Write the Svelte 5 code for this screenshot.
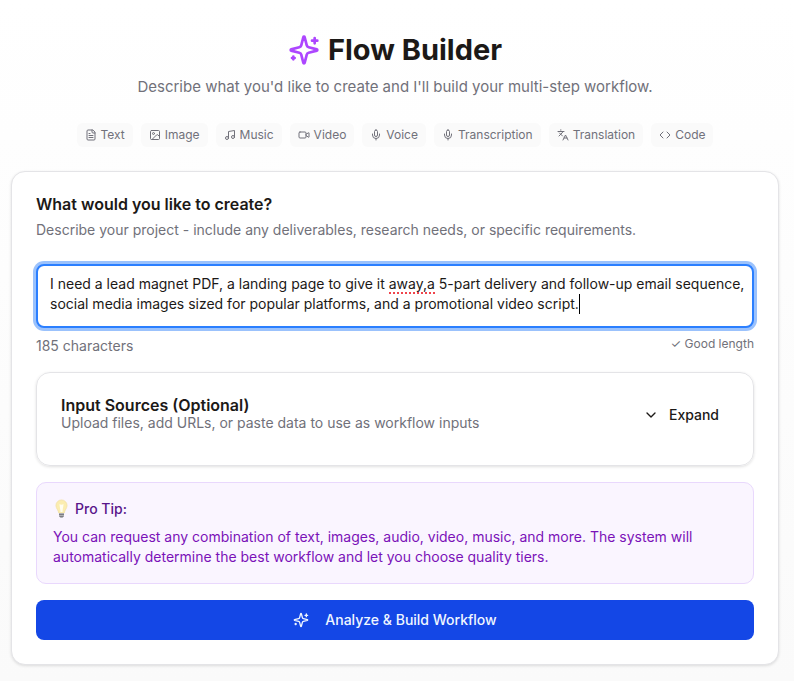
<script lang="ts">
	import { onMount } from 'svelte';

	let prompt = $state(
		'I need a lead magnet PDF, a landing page to give it away,a 5-part delivery and follow-up email sequence, social media images sized for popular platforms, and a promotional video script.'
	);
	let expanded = $state(false);
	let field: HTMLTextAreaElement;
	let fieldWidth = $state(0);
	let ready = $state(false);

	const misspelled = 'away,a';
	const lineHeight = 20;
	const padLeft = 14;
	const padTop = 10;

	const types = [
		{ name: 'Text', icon: 'text' },
		{ name: 'Image', icon: 'image' },
		{ name: 'Music', icon: 'music' },
		{ name: 'Video', icon: 'video' },
		{ name: 'Voice', icon: 'mic' },
		{ name: 'Transcription', icon: 'mic' },
		{ name: 'Translation', icon: 'translate' },
		{ name: 'Code', icon: 'code' }
	];

	onMount(() => {
		ready = true;
	});

	// Wraps the text the way the field does and finds the flagged word and the caret
	function measure(text: string, width: number) {
		const ctx = document.createElement('canvas').getContext('2d')!;
		ctx.font = getComputedStyle(field).font;
		const size = (s: string) => ctx.measureText(s).width;
		const room = width - 20;
		let line = '';
		let row = 0;
		let word = null;
		for (const w of text.split(' ')) {
			if (line && size(line + w) > room) {
				line = '';
				row++;
			}
			if (w === misspelled) {
				word = { left: padLeft + size(line), top: padTop + row * lineHeight, width: size(w) };
			}
			line += w + ' ';
		}
		return {
			word,
			caret: { left: padLeft + size(line.slice(0, -1)), top: padTop + row * lineHeight }
		};
	}

	let marks = $derived(ready && fieldWidth ? measure(prompt, fieldWidth) : null);
</script>

{#snippet icon(name: string)}
	<svg class="icon" viewBox="0 0 24 24" aria-hidden="true">
		{#if name === 'sparkles'}
			<path d="M9.937 15.5A2 2 0 0 0 8.5 14.063l-6.135-1.582a.5.5 0 0 1 0-.962L8.5 9.936A2 2 0 0 0 9.937 8.5l1.582-6.135a.5.5 0 0 1 .963 0L14.063 8.5A2 2 0 0 0 15.5 9.937l6.135 1.581a.5.5 0 0 1 0 .964L15.5 14.063a2 2 0 0 0-1.437 1.437l-1.582 6.135a.5.5 0 0 1-.963 0z" />
			<path d="M20 3v4M22 5h-4M4 17v2M5 18H3" />
		{:else if name === 'text'}
			<path d="M15 2H6a2 2 0 0 0-2 2v16a2 2 0 0 0 2 2h12a2 2 0 0 0 2-2V7z" />
			<path d="M14 2v4a2 2 0 0 0 2 2h4M10 9H8M16 13H8M16 17H8" />
		{:else if name === 'image'}
			<rect x="3" y="3" width="18" height="18" rx="2" />
			<circle cx="9" cy="9" r="2" />
			<path d="m21 15-3.1-3.1a2 2 0 0 0-2.8 0L6 21" />
		{:else if name === 'music'}
			<path d="M9 18V5l12-2v13" />
			<circle cx="6" cy="18" r="3" />
			<circle cx="18" cy="16" r="3" />
		{:else if name === 'video'}
			<path d="m16 13 5.2 3.5a.5.5 0 0 0 .8-.4V7.9a.5.5 0 0 0-.8-.4L16 10.5" />
			<rect x="2" y="6" width="14" height="12" rx="2" />
		{:else if name === 'mic'}
			<path d="M12 2a3 3 0 0 0-3 3v7a3 3 0 0 0 6 0V5a3 3 0 0 0-3-3z" />
			<path d="M19 10v2a7 7 0 0 1-14 0v-2M12 19v3" />
		{:else if name === 'translate'}
			<path d="m5 8 6 6M4 14l6-6 2-3M2 5h12M7 2h1M22 22l-5-10-5 10M14 18h6" />
		{:else if name === 'code'}
			<path d="m16 18 6-6-6-6M8 6l-6 6 6 6" />
		{:else if name === 'chevron'}
			<path d="m6 9 6 6 6-6" />
		{/if}
	</svg>
{/snippet}

<main>
	<header>
		<h1>{@render icon('sparkles')}Flow Builder</h1>
		<p>Describe what you'd like to create and I'll build your multi-step workflow.</p>
	</header>

	<ul class="types">
		{#each types as type}
			<li>{@render icon(type.icon)}{type.name}</li>
		{/each}
	</ul>

	<section class="card">
		<label class="title" for="prompt">What would you like to create?</label>
		<p class="muted" id="prompt-help">
			Describe your project - include any deliverables, research needs, or specific requirements.
		</p>

		<div class="editor" bind:clientWidth={fieldWidth}>
			<textarea
				id="prompt"
				aria-describedby="prompt-help"
				spellcheck="false"
				rows="2"
				bind:this={field}
				bind:value={prompt}
			></textarea>
			{#if marks}
				{#if marks.word}
					<span
						class="misspelled"
						style="left: {marks.word.left}px; top: {marks.word.top}px; width: {marks.word.width}px"
					></span>
				{/if}
				<span class="caret" style="left: {marks.caret.left}px; top: {marks.caret.top}px"></span>
			{/if}
		</div>

		<div class="status">
			<span class="muted">{prompt.length} characters</span>
			{#if prompt.length > 50}
				<span class="hint">✓ Good length</span>
			{/if}
		</div>

		<div class="sources">
			<div>
				<h2 class="title">Input Sources (Optional)</h2>
				<p class="muted">Upload files, add URLs, or paste data to use as workflow inputs</p>
			</div>
			<button class="expand" aria-expanded={expanded} onclick={() => (expanded = !expanded)}>
				{@render icon('chevron')}Expand
			</button>
		</div>

		<div class="tip">
			<h3>
				<svg class="bulb" viewBox="0 0 16 20" aria-hidden="true">
					<path d="M8 1a5.500 5.500 0 0 0-5.500 5.500C2.500 9.500 5 11 5.300 14h5.400c.3-3 2.800-4.500 2.800-7.500A5.500 5.500 0 0 0 8 1z" fill="#fbedb0" stroke="#f5e4ac" />
					<path d="M6 5c0 3 1 5 1 8h2c0-3 1-5 1-8-1 1-3 1-4 0z" fill="#fffdf0" />
					<path d="M5.500 14h5v3L9 19H7l-1.500-2z" fill="#b0b0b4" />
					<path d="M5.500 15.500h5M6 17.500h4" stroke="#7d7d84" />
				</svg>
				Pro Tip:
			</h3>
			<p>
				You can request any combination of text, images, audio, video, music, and more. The system
				will automatically determine the best workflow and let you choose quality tiers.
			</p>
		</div>

		<button class="submit">{@render icon('sparkles')}Analyze &amp; Build Workflow</button>
	</section>
</main>

<style>
	:global(body) {
		background: linear-gradient(#ffffff, #fafafa);
		font-family: Inter, 'Liberation Sans', sans-serif;
		font-size: 14px;
		line-height: 20px;
		color: #1c1917;
	}

	main {
		max-width: 768px;
		margin: 0 auto;
		padding: 32px 15px 16px 11px;
	}

	h1,
	h2,
	h3,
	p,
	ul {
		margin: 0;
		padding: 0;
	}

	button,
	textarea {
		font: inherit;
		color: inherit;
	}

	.icon {
		flex: none;
		width: 16px;
		height: 16px;
		fill: none;
		stroke: currentColor;
		stroke-width: 2;
		stroke-linecap: round;
		stroke-linejoin: round;
	}

	header {
		text-align: center;
	}

	h1 {
		display: flex;
		justify-content: center;
		align-items: center;
		gap: 8px;
		font-size: 29px;
		line-height: 36px;
		font-weight: 700;
	}

	h1 .icon {
		width: 32px;
		height: 32px;
		color: #ad46ff;
	}

	header p {
		margin-top: 8px;
		font-size: 15px;
		line-height: 22px;
		color: #71717a;
	}

	.types {
		display: flex;
		flex-wrap: wrap;
		justify-content: center;
		gap: 8px;
		margin: 25px 0 24px;
		list-style: none;
	}

	.types li {
		display: flex;
		align-items: center;
		gap: 4px;
		padding: 4px 8px;
		border-radius: 6px;
		background: #fafafa;
		font-size: 12px;
		line-height: 16px;
		color: #71717a;
	}

	.types .icon {
		width: 12px;
		height: 12px;
	}

	.card {
		padding: 24px;
		border: 1px solid #e4e4e7;
		border-radius: 14px;
		background: #ffffff;
		box-shadow: 0 1px 3px rgba(0, 0, 0, 0.12);
	}

	.title {
		display: block;
		font-size: 16px;
		line-height: 16px;
		font-weight: 600;
	}

	.muted {
		color: #71717a;
	}

	.card > .muted {
		margin-top: 8px;
	}

	.editor {
		position: relative;
		margin-top: 24px;
	}

	textarea {
		display: block;
		box-sizing: border-box;
		width: 100%;
		min-height: 64px;
		padding: 8px 4px 8px 12px;
		border: 2px solid #2b7fff;
		border-radius: 8px;
		resize: none;
		outline: none;
		overflow: hidden;
		background: #ffffff;
		box-shadow: 0 0 0 3px #9bc2fc;
		caret-color: transparent;
	}

	.misspelled,
	.caret {
		position: absolute;
		box-sizing: border-box;
		height: 20px;
		pointer-events: none;
	}

	.misspelled {
		border-bottom: 2px dotted #f0444c;
	}

	.caret {
		border-left: 1px solid #000000;
	}

	.status {
		display: flex;
		justify-content: space-between;
		margin-top: 8px;
	}

	.hint {
		font-size: 12px;
		line-height: 16px;
		color: #71717a;
	}

	.sources {
		display: flex;
		justify-content: space-between;
		align-items: flex-start;
		margin-top: 16px;
		padding: 24px 24px 32px;
		border: 1px solid #e4e4e7;
		border-radius: 14px;
		box-shadow: 0 1px 3px rgba(0, 0, 0, 0.12);
	}

	.expand {
		display: flex;
		align-items: center;
		gap: 10px;
		padding: 8px 10px;
		border: none;
		background: none;
		font-weight: 500;
		cursor: pointer;
	}

	.tip {
		margin-top: 16px;
		padding: 16px;
		border: 1px solid #e9d8fd;
		border-radius: 10px;
		background: #faf5ff;
		color: #7a12b8;
	}

	.tip h3 {
		display: flex;
		align-items: center;
		gap: 5px;
		margin-bottom: 8px;
		font-size: 14px;
		font-weight: 500;
		color: #59168b;
	}

	.bulb {
		width: 17px;
		height: 20px;
		fill: none;
	}

	.submit {
		display: flex;
		justify-content: center;
		align-items: center;
		gap: 16px;
		width: 100%;
		height: 40px;
		margin-top: 16px;
		border: none;
		border-radius: 8px;
		background: #1447e6;
		color: #eff6ff;
		font-weight: 500;
		cursor: pointer;
	}
</style>
